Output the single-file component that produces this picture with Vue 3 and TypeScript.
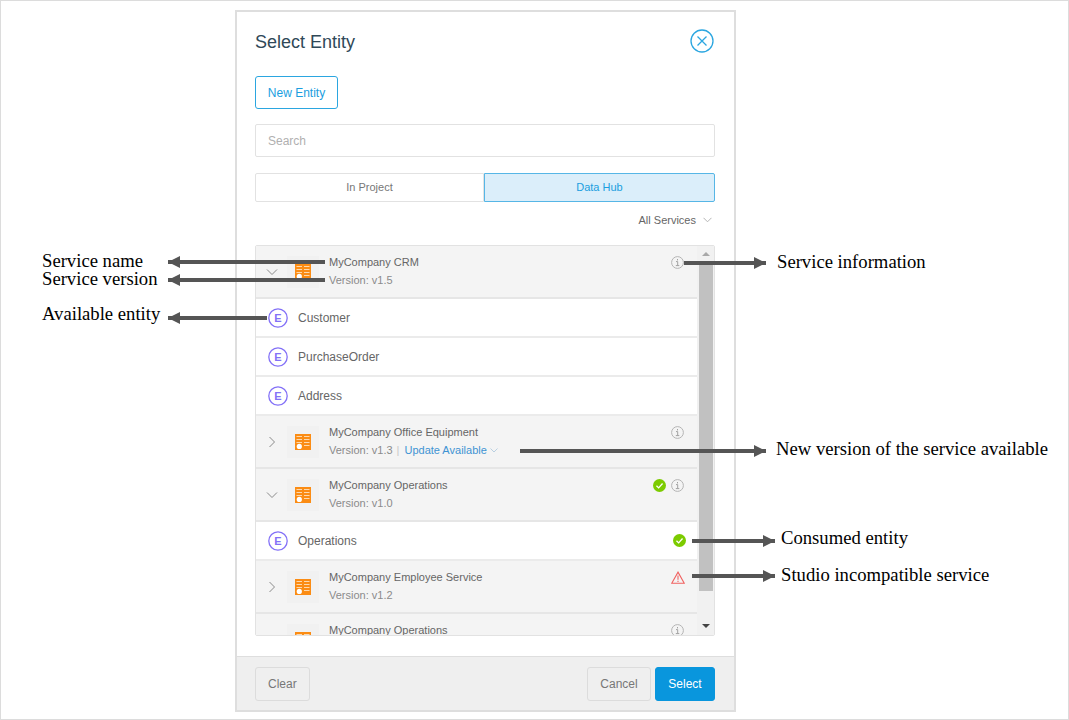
<template>
  <div class="stage">
    <div class="dialog">
      <header class="dialog-head">
        <h1>Select Entity</h1>
        <button class="close-btn" aria-label="Close">
          <svg width="24" height="24" viewBox="0 0 24 24">
            <circle cx="12" cy="12" r="11" fill="none" stroke="#2ba6e0" stroke-width="1.3" />
            <path d="M7.5 7.5l9 9M16.5 7.5l-9 9" stroke="#2ba6e0" stroke-width="1.3" fill="none" />
          </svg>
        </button>
      </header>

      <button class="new-btn">New Entity</button>
      <div class="search">Search</div>

      <div class="tabs">
        <div class="tab">In Project</div>
        <div class="tab active">Data Hub</div>
      </div>

      <div class="filter">
        <span>All Services</span>
        <svg width="9" height="6" viewBox="0 0 9 6"><path d="M.5.8l4 4 4-4" fill="none" stroke="#b5b5b5" /></svg>
      </div>

      <div class="list">
        <div class="rows">
          <template v-for="row in rows" :key="row.name">
            <div v-if="row.kind === 'service'" class="row service">
              <svg class="chevron" width="12" height="12" viewBox="0 0 12 12">
                <path v-if="row.open" d="M1 3.5l5 5 5-5" fill="none" stroke="#8a8a8a" />
                <path v-else-if="row.version" d="M3.5 1l5 5-5 5" fill="none" stroke="#8a8a8a" />
              </svg>
              <div class="tile">
                <svg width="16" height="16" viewBox="0 0 16 16">
                  <rect width="16" height="16" fill="#fb8c14" />
                  <path d="M1.5 2.5h5.5M1.5 5.5h5.5M1.5 8.5h5.5M9 2.5h5.5M9 5.5h5.5M9 8.5h5.5M9 11.5h5.5" stroke="#fdd9ae" stroke-width="1.2" fill="none" />
                  <circle cx="4.3" cy="12.4" r="2.6" fill="#fff" />
                </svg>
              </div>
              <div class="service-text">
                <div class="service-name">{{ row.name }}</div>
                <div v-if="row.version" class="service-version">
                  Version: {{ row.version }}
                  <template v-if="row.update">
                    <span class="divider">|</span>
                    <span class="update">Update Available</span>
                    <svg width="8" height="5" viewBox="0 0 8 5"><path d="M.5.5l3.5 3.5 3.5-3.5" fill="none" stroke="#b9cfe0" /></svg>
                  </template>
                </div>
              </div>
              <div class="status">
                <svg v-if="row.consumed" width="13" height="13" viewBox="0 0 12 12">
                  <circle cx="6" cy="6" r="6" fill="#7ccb00" />
                  <path d="M3.2 6.2l2 2 3.6-4" fill="none" stroke="#fff" stroke-width="1.2" />
                </svg>
                <svg v-if="row.warning" class="warn" width="14" height="13" viewBox="0 0 13 12">
                  <path d="M6.5 1L12.3 11.3H.7z" fill="none" stroke="#f0605f" />
                  <path d="M6.5 4.2v4M6.5 9v1.2" stroke="#f0605f" />
                </svg>
                <svg v-else width="13" height="13" viewBox="0 0 13 13">
                  <circle cx="6.5" cy="6.5" r="5.9" fill="none" stroke="#b4b4b4" />
                  <path d="M5 5.6h1.7v3.8M4.8 9.6h3.5M6.5 3v1.4" fill="none" stroke="#a0a0a0" />
                </svg>
              </div>
            </div>

            <div v-else class="row entity">
              <svg width="20" height="20" viewBox="0 0 20 20">
                <circle cx="10" cy="10" r="9.2" fill="none" stroke="#8371f7" stroke-width="1.3" />
                <text x="10" y="13.6" text-anchor="middle" class="entity-letter">E</text>
              </svg>
              <span class="entity-name">{{ row.name }}</span>
              <svg v-if="row.consumed" class="entity-check" width="13" height="13" viewBox="0 0 12 12">
                <circle cx="6" cy="6" r="6" fill="#7ccb00" />
                <path d="M3.2 6.2l2 2 3.6-4" fill="none" stroke="#fff" stroke-width="1.2" />
              </svg>
            </div>
          </template>
        </div>

        <div class="scrollbar">
          <span class="arrow up"></span>
          <div class="track"><div class="thumb"></div></div>
          <span class="arrow down"></span>
        </div>
      </div>

      <footer class="dialog-foot">
        <button class="foot-btn">Clear</button>
        <div class="foot-right">
          <button class="foot-btn cancel">Cancel</button>
          <button class="foot-btn primary">Select</button>
        </div>
      </footer>
    </div>

    <!-- callouts drawn over the screenshot -->
    <svg class="arrows" width="1069" height="720" viewBox="0 0 1069 720">
      <g v-for="a in arrows" :key="a.y + '-' + a.from">
        <line :x1="a.from" :y1="a.y" :x2="a.to" :y2="a.y" stroke="#555" stroke-width="4" />
        <polygon :points="head(a)" fill="#555" />
      </g>
    </svg>
    <span v-for="n in notes" :key="n.text" class="note" :style="{ left: n.x + 'px', top: n.y + 'px' }">{{ n.text }}</span>
  </div>
</template>

<script setup lang="ts">
interface Row {
  kind: "service" | "entity";
  name: string;
  version?: string;
  open?: boolean;
  update?: boolean;
  consumed?: boolean;
  warning?: boolean;
}

interface Arrow {
  from: number;
  to: number;
  y: number;
}

const rows: Row[] = [
  { kind: "service", name: "MyCompany CRM", version: "v1.5", open: true },
  { kind: "entity", name: "Customer" },
  { kind: "entity", name: "PurchaseOrder" },
  { kind: "entity", name: "Address" },
  { kind: "service", name: "MyCompany Office Equipment", version: "v1.3", update: true },
  { kind: "service", name: "MyCompany Operations", version: "v1.0", open: true, consumed: true },
  { kind: "entity", name: "Operations", consumed: true },
  { kind: "service", name: "MyCompany Employee Service", version: "v1.2", warning: true },
  // only the title of this last row shows above the scroll edge
  { kind: "service", name: "MyCompany Operations " },
];

const arrows: Arrow[] = [
  { from: 325, to: 168, y: 262 },
  { from: 325, to: 168, y: 280 },
  { from: 267, to: 168, y: 318 },
  { from: 684, to: 766, y: 263 },
  { from: 520, to: 766, y: 451 },
  { from: 692, to: 775, y: 541 },
  { from: 692, to: 775, y: 576 },
];

const notes = [
  { text: "Service name", x: 42, y: 252 },
  { text: "Service version", x: 42, y: 270 },
  { text: "Available entity", x: 42, y: 305 },
  { text: "Service information", x: 777, y: 253 },
  { text: "New version of the service available", x: 776, y: 440 },
  { text: "Consumed entity", x: 781, y: 529 },
  { text: "Studio incompatible service", x: 781, y: 566 },
];

const head = (a: Arrow) => {
  const dir = a.to > a.from ? -12 : 12;
  return `${a.to},${a.y} ${a.to + dir},${a.y - 6} ${a.to + dir},${a.y + 6}`;
};
</script>

<style>
html,
body {
  margin: 0;
  background: #fff;
}
</style>

<style scoped>
.stage {
  position: relative;
  box-sizing: border-box;
  width: 1069px;
  height: 720px;
  padding: 9px 0 0 234px;
  border: 1px solid #dcdcdc;
  overflow: hidden;
  font-family: "Liberation Sans", Arial, sans-serif;
  background: #fff;
}

.dialog {
  box-sizing: border-box;
  width: 501px;
  height: 702px;
  border: 2px solid #dedede;
  background: #fff;
  display: flex;
  flex-direction: column;
  padding: 0 19px 0 18px;
  position: relative;
}

.dialog-head {
  box-sizing: border-box;
  height: 64px;
  padding-bottom: 3px;
  display: flex;
  align-items: center;
  justify-content: space-between;
  flex: none;
}

.dialog-head h1 {
  margin: 0;
  font-size: 18px;
  font-weight: 400;
  color: #2f4858;
}

.close-btn {
  border: 0;
  background: none;
  padding: 0;
  height: 24px;
  margin-right: 1px;
  margin-top: -4px;
}

.new-btn {
  box-sizing: border-box;
  flex: none;
  width: 83px;
  height: 33px;
  padding: 0;
  border: 1px solid #2ba6e0;
  border-radius: 3px;
  background: #fff;
  color: #1a9ee0;
  font: 12px "Liberation Sans", Arial, sans-serif;
}

.search {
  box-sizing: border-box;
  flex: none;
  height: 33px;
  margin-top: 15px;
  padding-left: 12px;
  line-height: 33px;
  border: 1px solid #e2e2e2;
  border-radius: 2px;
  color: #b0b0b0;
  font-size: 12px;
}

.tabs {
  flex: none;
  display: flex;
  height: 29px;
  margin-top: 16px;
  font-size: 11px;
}

.tab {
  box-sizing: border-box;
  width: 229px;
  line-height: 27px;
  text-align: center;
  color: #777;
  border: 1px solid #e2e2e2;
  border-radius: 2px 0 0 2px;
}

.tab.active {
  width: 231px;
  color: #1a9ee0;
  background: #dbeefa;
  border-color: #56b6e6;
  border-radius: 0 2px 2px 0;
}

.filter {
  flex: none;
  height: 43px;
  display: flex;
  align-items: flex-start;
  justify-content: flex-end;
  gap: 7px;
  padding-right: 3px;
  padding-top: 12px;
  box-sizing: border-box;
  font-size: 11px;
  color: #666;
}

.filter svg {
  margin-top: 3px;
}

.list {
  box-sizing: border-box;
  flex: none;
  display: flex;
  height: 391px;
  width: 460px;
  border: 1px solid #e2e2e2;
  border-radius: 2px;
  overflow: hidden;
}

.rows {
  flex: 1;
  min-width: 0;
  overflow: hidden;
}

.row {
  box-sizing: border-box;
  display: flex;
  align-items: center;
  border-bottom: 2px solid #ebebeb;
}

.service {
  height: 53px;
  background: #f4f4f4;
  padding-left: 10px;
  border-bottom-color: #e6e6e6;
}

.chevron {
  flex: none;
}

.tile {
  flex: none;
  width: 32px;
  height: 32px;
  margin-left: 9px;
  display: flex;
  align-items: center;
  justify-content: center;
  background: #f1f1f1;
}

.service-text {
  flex: 1;
  margin-left: 10px;
  align-self: flex-start;
  padding-top: 8px;
  font-size: 11px;
  color: #666;
}

.service-name {
  line-height: 16px;
}

.service-version {
  margin-top: 2px;
  line-height: 16px;
  color: #8b8b8b;
  display: flex;
  align-items: center;
  gap: 4px;
}

.divider {
  color: #c8c8c8;
}

.update {
  margin-left: 1px;
  color: #3e93d3;
}

.service-version svg {
  margin-left: -1px;
}

.status {
  flex: none;
  align-self: flex-start;
  display: flex;
  align-items: center;
  gap: 5px;
  padding: 10px 13px 0 0;
}

.warn {
  margin-right: -1px;
}

.entity {
  height: 39px;
  padding-left: 12px;
  background: #fff;
}

.entity-letter {
  font: bold 11px "Liberation Sans", Arial, sans-serif;
  fill: #8371f7;
}

.entity-name {
  flex: 1;
  margin-left: 10px;
  font-size: 12px;
  color: #666;
}

.entity-check {
  margin-right: 11px;
}

.scrollbar {
  flex: none;
  width: 17px;
  background: #f1f1f1;
  display: flex;
  flex-direction: column;
  align-items: center;
}

.track {
  flex: 1;
  width: 100%;
  padding: 2px 1px 0 2px;
  box-sizing: border-box;
}

.thumb {
  height: 327px;
  background: #c1c1c1;
}

.arrow {
  flex: none;
  width: 0;
  height: 0;
  margin: 6px 0;
  border-left: 4px solid transparent;
  border-right: 4px solid transparent;
}

.arrow.up {
  border-bottom: 4px solid #a8a8a8;
}

.arrow.down {
  margin: 5px 0 7px;
  border-top: 4px solid #444;
}

.dialog-foot {
  box-sizing: border-box;
  flex: none;
  height: 54px;
  margin: 20px -19px 0 -18px;
  padding: 10px 19px 0 18px;
  display: flex;
  align-items: flex-start;
  justify-content: space-between;
  background: #efefef;
  border-top: 1px solid #dedede;
}

.foot-right {
  display: flex;
  gap: 4px;
}

.foot-btn {
  box-sizing: border-box;
  height: 34px;
  padding: 0 12px;
  border: 1px solid #dcdcdc;
  border-radius: 3px;
  background: #efefef;
  color: #777;
  font: 12px "Liberation Sans", Arial, sans-serif;
}

.foot-btn.cancel {
  width: 64px;
}

.foot-btn.primary {
  width: 60px;
  background: #0996dd;
  border-color: #0996dd;
  color: #fff;
}

.arrows {
  position: absolute;
  left: -1px;
  top: -1px;
  pointer-events: none;
}

.note {
  position: absolute;
  margin: -1px 0 0 -1px;
  font: 18.67px/18px "Liberation Serif", "Times New Roman", serif;
  color: #000;
  white-space: nowrap;
}
</style>
